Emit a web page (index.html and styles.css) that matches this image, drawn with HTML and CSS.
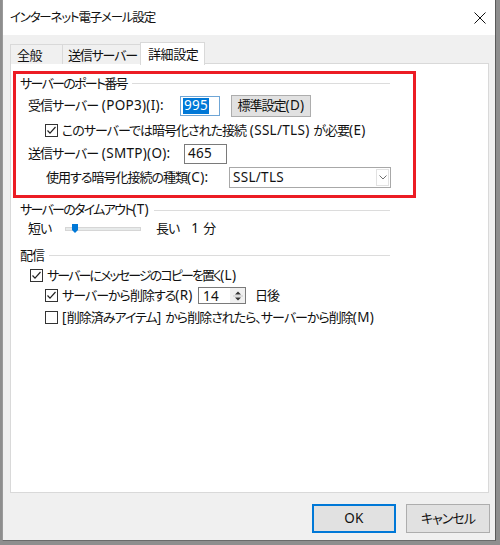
FILE: index.html
```html
<!DOCTYPE html>
<html lang="ja">
<head>
<meta charset="utf-8">
<title>インターネット電子メール設定</title>
<link rel="stylesheet" href="styles.css">
</head>
<body>
<div class="window">
  <div class="titlebar">
    <span class="title">インターネット電子メール設定</span>
    <svg class="close" width="12" height="12" viewBox="0 0 12 12"><path d="M0.5 0.5 L11.5 11.5 M11.5 0.5 L0.5 11.5" stroke="#111" stroke-width="1" fill="none"/></svg>
  </div>
  <div class="client">
    <div class="tabs">
      <div class="tab t1">全般</div>
      <div class="tab t2">送信サーバー</div>
      <div class="tab active">詳細設定</div>
    </div>
    <div class="panel">
      <div class="highlight">
        <div class="group-head"><span class="tight">サーバーのポート番号</span><i class="rule"></i></div>
        <div class="row r1">
          <span class="lbl w-pop">受信サーバー<span class="l"> (POP3)(I):</span></span>
          <span class="field f-pop focused"><span class="sel l">995</span></span>
          <span class="btn std">標準設定<span class="l">(D)</span></span>
        </div>
        <div class="row r2 ind2">
          <span class="cb checked"><svg width="11" height="11" viewBox="0 0 11 11"><path d="M1.5 5.5 L4 8.2 L9.5 2" stroke="#222" stroke-width="1.2" fill="none"/></svg></span>
          <span class="cbtext">このサーバーでは暗号化された接続<span class="l"> (SSL/TLS) </span>が必要<span class="l">(E)</span></span>
        </div>
        <div class="row r3">
          <span class="lbl w-smtp">送信サーバー<span class="l"> (SMTP)(O):</span></span>
          <span class="field f-smtp l">465</span>
        </div>
        <div class="row r4 ind2">
          <span class="lbl w-enc">使用する暗号化接続の種類<span class="l">(C):</span></span>
          <span class="combo"><span class="combo-val l">SSL/TLS</span><span class="drop"><svg width="8" height="5" viewBox="0 0 8 5"><path d="M0.5 0.5 L4 4 L7.5 0.5" stroke="#707070" stroke-width="1" fill="none"/></svg></span></span>
        </div>
      </div>

      <div class="plain">
        <div class="group-head g2"><span class="tight">サーバーのタイムアウト<span class="l">(T)</span></span><i class="rule"></i></div>
        <div class="row rs">
          <span class="short">短い</span>
          <span class="slider">
            <span class="track"></span>
            <svg class="thumb" width="6" height="9" viewBox="0 0 6 9"><path d="M0 0 H6 V6 L3 9 L0 6 Z" fill="#0078d7"/></svg>
          </span>
          <span class="long">長い</span><span class="num l">1</span><span class="min">分</span>
        </div>

        <div class="group-head g3"><span>配信</span><i class="rule"></i></div>
        <div class="row c1">
          <span class="cb checked"><svg width="11" height="11" viewBox="0 0 11 11"><path d="M1.5 5.5 L4 8.2 L9.5 2" stroke="#222" stroke-width="1.2" fill="none"/></svg></span>
          <span class="cbtext tighter">サーバーにメッセージのコピーを置く<span class="l">(L)</span></span>
        </div>
        <div class="row c2 ind2b">
          <span class="cb checked"><svg width="11" height="11" viewBox="0 0 11 11"><path d="M1.5 5.5 L4 8.2 L9.5 2" stroke="#222" stroke-width="1.2" fill="none"/></svg></span>
          <span class="cbtext w-del">サーバーから削除する<span class="l">(R)</span></span>
          <span class="spin"><span class="spin-val l">14</span><span class="spin-btns"><svg width="10" height="14" viewBox="0 0 10 14"><path d="M2 5.5 L5 2.5 L8 5.5 Z M2 8.5 L5 11.5 L8 8.5 Z" fill="#333"/><path d="M0 7 H10" stroke="#c8c8c8" stroke-width="1"/></svg></span></span>
          <span class="days">日後</span>
        </div>
        <div class="row c3 ind2b">
          <span class="cb"></span>
          <span class="cbtext"><span class="l">[</span>削除済みアイテム<span class="l">] </span>から削除されたら、サーバーから削除<span class="l">(M)</span></span>
        </div>
      </div>
    </div>
    <div class="footer">
      <span class="btn big ok l">OK</span>
      <span class="btn big">キャンセル</span>
    </div>
  </div>
</div>
</body>
</html>
```

FILE: styles.css
```css
* { box-sizing: border-box; }
html, body { margin: 0; padding: 0; }
body {
  width: 500px;
  height: 545px;
  background: #8e8e8e;
  overflow: hidden;
  font-family: "Noto Sans", "Noto Sans CJK JP", sans-serif;
  font-feature-settings: "palt" 1;
  font-size: 13px;
  letter-spacing: -1px;
  color: #111;
}
.l { font-size: 13.5px; letter-spacing: 0.3px; }
.tight { letter-spacing: -1.7px; }
.tighter { letter-spacing: -1.9px; }
.tight .l, .tighter .l { letter-spacing: 0.3px; }
.window {
  margin-left: 2px;
  width: 494px;
  height: 541px;
  border-left: 1px solid #9a9a9a;
  border-right: 1px solid #5a5a5a;
  border-bottom: 1px solid #6a6a6a;
  display: flex;
  flex-direction: column;
  background: #f0f0f0;
}
.titlebar {
  height: 35px;
  background: #fff;
  display: flex;
  align-items: center;
  justify-content: space-between;
  padding: 1px 9px 0 7px;
  flex: none;
}
.title { font-size: 12.5px; line-height: 1; letter-spacing: -1.2px; }
.close { display: block; }
.client {
  flex: 1;
  display: flex;
  flex-direction: column;
  padding: 8px 6px 0 7px;
}
.tabs {
  height: 21px;
  display: flex;
  align-items: flex-end;
  position: relative;
  z-index: 1;
  margin-bottom: -1px;
}
.tab {
  height: 20px;
  border: 1px solid #d9d9d9;
  border-bottom: none;
  background: #f0f0f0;
  display: flex;
  align-items: center;
  line-height: 1;
  letter-spacing: -0.4px;
  white-space: nowrap;
  padding: 2px 0 0 6px;
  flex: none;
  overflow: hidden;
}
.tab.t1 { width: 52px; border-right: none; }
.tab.t2 { width: 78px; border-right: none; padding-left: 5px; letter-spacing: -1.2px; }
.tab.active {
  width: 65px;
  height: 23px;
  margin-bottom: -1px;
  background: #fff;
  padding: 0 0 0 7px;
}
.panel {
  flex: 1;
  background: #fff;
  border: 1px solid #d9d9d9;
  padding: 7px 0 0 2px;
}
.highlight {
  width: 403px;
  border: 3px solid #ec1c24;
  padding: 1px 0 7px 4px;
}
.group-head {
  height: 16px;
  width: 370px;
  display: flex;
  align-items: center;
  line-height: 1;
  white-space: nowrap;
}
.group-head .rule {
  flex: 1;
  height: 1px;
  background: #dcdcdc;
  margin-left: 5px;
  margin-top: 1px;
}
.row {
  display: flex;
  align-items: center;
  height: 22px;
  line-height: 1;
  white-space: nowrap;
  padding-top: 1px;
}
.lbl { display: inline-block; }
.r1 { height: 24px; margin-top: 2px; padding-left: 8px; }
.r2 { margin-top: 2px; }
.r3 { margin-top: 1px; padding-left: 8px; }
.r4 { margin-top: 2px; }
.ind2 { padding-left: 25px; }
.r4.ind2 { padding-left: 26px; }
.w-pop { width: 152px; }
.w-smtp { width: 156px; }
.w-enc { width: 183px; }
.field {
  height: 20px;
  border: 1px solid #7a7a7a;
  background: #fff;
  display: flex;
  align-items: center;
  padding-left: 3px;
}
.f-pop { width: 40px; border-color: #6fa6d6; padding-left: 2px; }
.f-smtp { width: 43px; height: 20px; }
.sel {
  background: #0078d7;
  color: #fff;
  height: 16px;
  display: flex;
  align-items: center;
  padding: 0 1px;
}
.btn {
  background: #e1e1e1;
  border: 1px solid #adadad;
  display: flex;
  align-items: center;
  justify-content: center;
  line-height: 1;
}
.std { width: 80px; height: 22px; margin-left: 11px; }
.cb {
  width: 13px;
  height: 13px;
  border: 1px solid #333;
  background: #fff;
  display: flex;
  align-items: center;
  justify-content: center;
  flex: none;
}
.cb svg { display: block; }
.cbtext { margin-left: 4px; }
.combo {
  width: 162px;
  height: 21px;
  border: 1px solid #a8a8a8;
  background: #fff;
  display: flex;
  align-items: center;
  justify-content: space-between;
  padding: 0 1px 0 3px;
}
.drop {
  width: 13px;
  height: 17px;
  border: 1px solid #e2e2e2;
  display: flex;
  align-items: center;
  justify-content: center;
}
.plain { padding-left: 7px; }
.g2 { margin-top: 4px; }
.rs { height: 16px; margin-top: 2px; padding-left: 8px; }
.short { width: 37px; }
.slider {
  width: 76px;
  height: 16px;
  position: relative;
  display: flex;
  align-items: center;
}
.track {
  width: 76px;
  height: 4px;
  background: #e7eaea;
  border: 1px solid #d6d6d6;
}
.thumb { position: absolute; left: 7px; top: 3px; }
.long { margin-left: 15px; }
.num { margin-left: 12px; }
.min { margin-left: 4px; }
.g3 { margin-top: 11px; }
.c1 { height: 18px; margin-top: 3px; padding-left: 10px; }
.c2 { height: 20px; margin-top: 1px; }
.c3 { height: 20px; margin-top: 2px; }
.ind2b { padding-left: 25px; }
.w-del { width: 136px; }
.spin {
  width: 48px;
  height: 17px;
  border: 1px solid #7a7a7a;
  display: flex;
  align-items: center;
  justify-content: space-between;
  padding-left: 4px;
}
.spin-val { margin-top: 2px; }
.spin-btns {
  width: 15px;
  height: 15px;
  background: #f0f0f0;
  display: flex;
  align-items: center;
  justify-content: center;
}
.spin-btns svg { display: block; }
.days { margin-left: 9px; }
.footer {
  height: 47px;
  flex: none;
  display: flex;
  justify-content: flex-end;
  align-items: flex-start;
  gap: 10px;
  padding-top: 11px;
  margin-right: -1px;
}
.big { width: 84px; height: 29px; }
.ok { border: 1px solid #0078d7; box-shadow: inset 0 0 0 1px #0078d7; }
```
